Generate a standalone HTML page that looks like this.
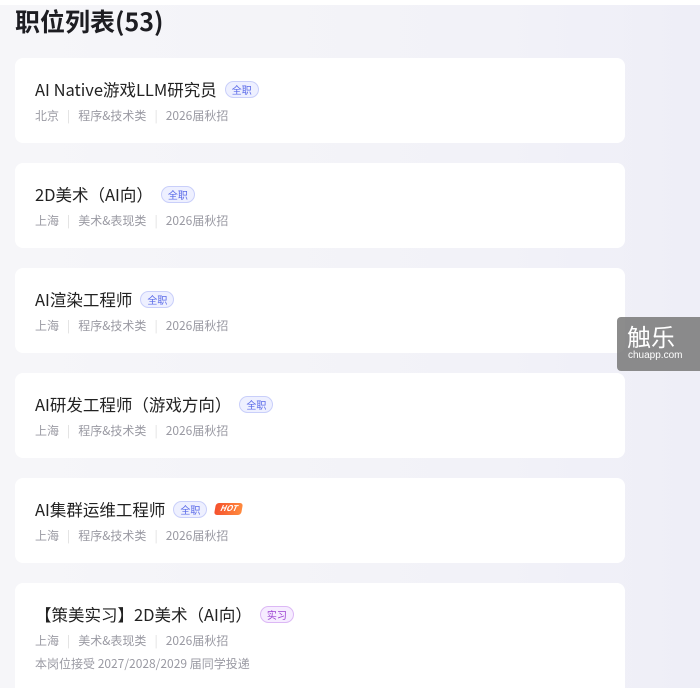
<!DOCTYPE html>
<html><head><meta charset="utf-8"><style>
html,body{margin:0;width:700px;height:688px;overflow:hidden}
body{background:linear-gradient(90deg,#f6f6f9,#f2f2f8 70%,#eeeef7);font-family:"Liberation Sans","Noto Sans CJK SC",sans-serif;position:relative}
.top{position:absolute;left:0;top:0;width:700px;height:5px;background:#fff}
h1{position:absolute;left:15px;top:3px;margin:0;font-size:25px;font-weight:bold;color:#1d1d22;font-family:"Noto Sans CJK SC",sans-serif}
.card{position:absolute;left:15px;width:610px;height:85px;background:#fff;border-radius:8px}
.t{position:absolute;left:20px;top:19px;font-size:16.5px;color:#222;font-family:"Noto Sans CJK SC",sans-serif;display:flex;align-items:center;white-space:nowrap;line-height:24px}
.tag{margin-left:8px;font-size:10px;color:#5a6ae8;background:#eef0ff;border:1px solid #c9cffa;border-radius:9px;padding:0 6px;line-height:15px}
.tag.p{color:#9a3fd0;background:#f6ecff;border-color:#dcb8f5}
.hot{margin-left:8px;font-size:8px;font-weight:bold;font-style:italic;color:#fff;background:linear-gradient(90deg,#f5512e,#ff8a3d);border-radius:3px;padding:0 5px;line-height:12px;transform:skewX(-10deg)}
.m{position:absolute;left:20px;top:49px;font-size:12px;color:#9a9aa3;font-family:"Noto Sans CJK SC",sans-serif;white-space:nowrap}
.m i{font-style:normal;color:#ddd;margin:0 8px}
.n{position:absolute;left:20px;top:72px;font-size:12px;color:#9a9aa3;font-family:"Noto Sans CJK SC",sans-serif}
.wm{position:absolute;left:617px;top:317px;width:90px;height:54px;background:rgba(120,120,120,.85);border-radius:4px;color:#fff;text-align:left}
.wm b{position:absolute;left:10px;top:1px;font-size:24px;font-weight:normal;font-family:"Noto Sans CJK SC",sans-serif}
.wm s{position:absolute;left:11px;top:33px;font-size:10px;text-decoration:none}
</style></head><body>
<div class="top"></div>
<h1>职位列表(53)</h1>
<div class="card" style="top:58px"><div class="t">AI Native游戏LLM研究员<span class="tag">全职</span></div><div class="m">北京<i>|</i>程序&amp;技术类<i>|</i>2026届秋招</div></div>
<div class="card" style="top:163px"><div class="t">2D美术（AI向）<span class="tag">全职</span></div><div class="m">上海<i>|</i>美术&amp;表现类<i>|</i>2026届秋招</div></div>
<div class="card" style="top:268px"><div class="t">AI渲染工程师<span class="tag">全职</span></div><div class="m">上海<i>|</i>程序&amp;技术类<i>|</i>2026届秋招</div></div>
<div class="card" style="top:373px"><div class="t">AI研发工程师（游戏方向）<span class="tag">全职</span></div><div class="m">上海<i>|</i>程序&amp;技术类<i>|</i>2026届秋招</div></div>
<div class="card" style="top:478px"><div class="t">AI集群运维工程师<span class="tag">全职</span><span class="hot">HOT</span></div><div class="m">上海<i>|</i>程序&amp;技术类<i>|</i>2026届秋招</div></div>
<div class="card" style="top:583px;height:105px;border-radius:8px 8px 0 0"><div class="t">【策美实习】2D美术（AI向）<span class="tag p">实习</span></div><div class="m">上海<i>|</i>美术&amp;表现类<i>|</i>2026届秋招</div><div class="n">本岗位接受 2027/2028/2029 届同学投递</div></div>
<div class="wm"><b>触乐</b><s>chuapp.com</s></div>
</body></html>
